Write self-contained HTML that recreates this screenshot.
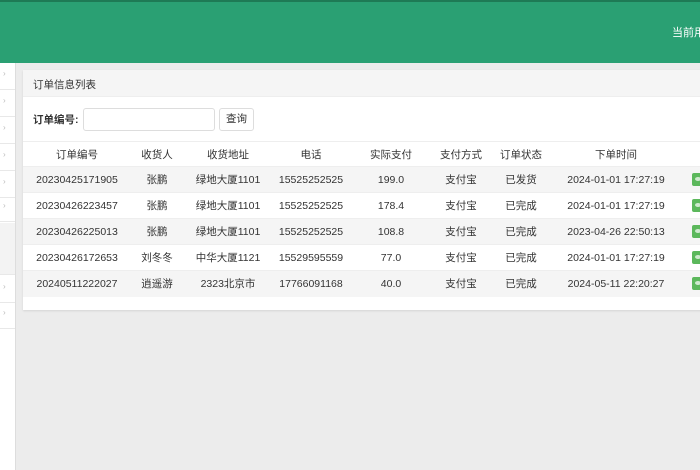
<!DOCTYPE html>
<html><head><meta charset="utf-8"><style>
*{margin:0;padding:0;box-sizing:border-box}
body{width:700px;height:470px;overflow:hidden;background:#ececec;font-family:"Liberation Sans","Noto Sans CJK SC",sans-serif;font-size:11px;color:#333;position:relative}
.hdr{position:absolute;left:0;top:0;width:700px;height:63px;background:#2aa073;border-top:2px solid #1e7a55}
.hdr span{position:absolute;left:672px;top:22px;color:#fff;font-size:11px;white-space:nowrap}
.side{position:absolute;left:0;top:63px;width:16px;height:407px;background:#fff;border-right:1px solid #ddd}
.side i{position:absolute;left:0;width:15px;border-bottom:1px solid #e8e8e8;height:27px}
.side i:after{content:"›";position:absolute;left:3px;top:6px;font-size:8px;color:#bbb;font-style:normal}
.panel{position:absolute;left:23px;top:70px;width:690px;height:240px;background:#fff;box-shadow:0 1px 2px rgba(0,0,0,.1)}
.ph{height:27px;background:#f5f5f5;border-bottom:1px solid #eee;padding:7px 10px;font-size:10.5px;color:#333}
.lbl{position:absolute;left:10px;top:42px;font-weight:bold;font-size:10.5px}
.inp{position:absolute;left:60px;top:38px;width:132px;height:23px;border:1px solid #ddd;border-radius:3px}
.btn{position:absolute;left:196px;top:38px;width:35px;height:23px;border:1px solid #ddd;border-radius:3px;text-align:center;line-height:21px;font-size:10.5px}
table{position:absolute;left:0;top:71px;border-collapse:collapse;width:690px;table-layout:fixed}
th{font-weight:normal;height:25px;border-top:1px solid #eee;font-size:10.5px;white-space:nowrap}
td{height:26px;border-top:1px solid #eee;text-align:center;font-size:10.5px;white-space:nowrap}
tr.g td{background:#f5f5f5}
.gb{display:inline-block;width:14px;height:13px;background:#5cb85c;border-radius:2px;vertical-align:middle;position:relative}
.gb:after{content:"";position:absolute;left:3px;top:4px;width:6px;height:4px;border-radius:50%;background:#cfe9cf}
td.b{text-align:left;padding-left:13px}
</style></head><body>
<div class="hdr"><span>当前用户</span></div>
<div class="side">
<i style="top:0"></i><i style="top:27px"></i><i style="top:54px"></i><i style="top:81px"></i><i style="top:108px"></i><i style="top:132px"></i>
<div style="position:absolute;left:0;top:160px;width:15px;height:52px;background:#f3f3f3;border-bottom:1px solid #e8e8e8"></div>
<i style="top:213px"></i><i style="top:239px"></i>
</div>
<div class="panel">
<div class="ph">订单信息列表</div>
<div class="lbl">订单编号:</div><div class="inp"></div><div class="btn">查询</div>
<table>
<colgroup><col style="width:108px"><col style="width:52px"><col style="width:90px"><col style="width:76px"><col style="width:84px"><col style="width:56px"><col style="width:64px"><col style="width:126px"><col style="width:34px"></colgroup>
<tr><th>订单编号</th><th>收货人</th><th>收货地址</th><th>电话</th><th>实际支付</th><th>支付方式</th><th>订单状态</th><th>下单时间</th><th></th></tr>
<tr class="g"><td>20230425171905</td><td>张鹏</td><td>绿地大厦1101</td><td>15525252525</td><td>199.0</td><td>支付宝</td><td>已发货</td><td>2024-01-01 17:27:19</td><td class="b"><span class="gb"></span></td></tr>
<tr><td>20230426223457</td><td>张鹏</td><td>绿地大厦1101</td><td>15525252525</td><td>178.4</td><td>支付宝</td><td>已完成</td><td>2024-01-01 17:27:19</td><td class="b"><span class="gb"></span></td></tr>
<tr class="g"><td>20230426225013</td><td>张鹏</td><td>绿地大厦1101</td><td>15525252525</td><td>108.8</td><td>支付宝</td><td>已完成</td><td>2023-04-26 22:50:13</td><td class="b"><span class="gb"></span></td></tr>
<tr><td>20230426172653</td><td>刘冬冬</td><td>中华大厦1121</td><td>15529595559</td><td>77.0</td><td>支付宝</td><td>已完成</td><td>2024-01-01 17:27:19</td><td class="b"><span class="gb"></span></td></tr>
<tr class="g"><td>20240511222027</td><td>逍遥游</td><td>2323北京市</td><td>17766091168</td><td>40.0</td><td>支付宝</td><td>已完成</td><td>2024-05-11 22:20:27</td><td class="b"><span class="gb"></span></td></tr>
</table>
</div>
</body></html>
